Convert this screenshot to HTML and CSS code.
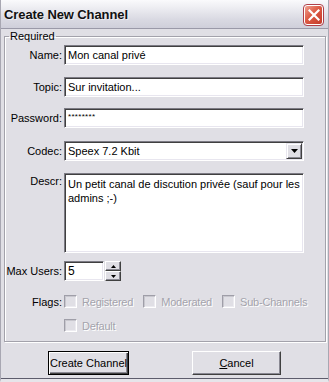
FILE: index.html
```html
<!DOCTYPE html>
<html>
<head>
<meta charset="utf-8">
<link rel="stylesheet" href="styles.css">
</head>
<body>
<div class="window">
  <div class="titlebar">
    <span class="title">Create New Channel</span>
    <span class="close"><svg width="12" height="12" viewBox="0 0 12 12"><path d="M1.5 1.5 L10.5 10.5 M10.5 1.5 L1.5 10.5" stroke="#fff" stroke-width="2.2" stroke-linecap="square"/></svg></span>
  </div>
  <div class="body">
    <fieldset class="group">
      <legend>Required</legend>
      <div class="row r-name">
        <label class="lbl">Name:</label>
        <div class="field">Mon canal privé</div>
      </div>
      <div class="row r-topic">
        <label class="lbl">Topic:</label>
        <div class="field">Sur invitation...</div>
      </div>
      <div class="row r-pass">
        <label class="lbl">Password:</label>
        <div class="field pass">********</div>
      </div>
      <div class="row r-codec">
        <label class="lbl">Codec:</label>
        <div class="field combo"><span class="combo-text">Speex 7.2 Kbit</span><span class="combo-btn"><svg width="7" height="4" viewBox="0 0 7 4"><path d="M0 0 H7 L3.5 4 Z" fill="#000"/></svg></span></div>
      </div>
      <div class="row r-descr">
        <label class="lbl top">Descr:</label>
        <div class="field area">Un petit canal de discution privée (sauf pour les admins ;-)</div>
      </div>
      <div class="row r-max">
        <label class="lbl">Max Users:</label>
        <div class="field num">5</div>
        <div class="spin">
          <span class="spin-btn"><svg width="5" height="3" viewBox="0 0 5 3"><path d="M2.5 0 L5 3 H0 Z" fill="#000"/></svg></span>
          <span class="spin-btn"><svg width="5" height="3" viewBox="0 0 5 3"><path d="M0 0 H5 L2.5 3 Z" fill="#000"/></svg></span>
        </div>
      </div>
      <div class="row r-flags">
        <label class="lbl">Flags:</label>
        <div class="checks">
          <span class="check"><span class="box"></span><span class="ctext">Registered</span></span>
          <span class="check"><span class="box"></span><span class="ctext">Moderated</span></span>
          <span class="check"><span class="box"></span><span class="ctext">Sub-Channels</span></span>
        </div>
      </div>
      <div class="row r-default">
        <span class="lbl"></span>
        <div class="checks">
          <span class="check"><span class="box"></span><span class="ctext">Default</span></span>
        </div>
      </div>
    </fieldset>
    <div class="buttons">
      <button class="btn default">Create Channel</button>
      <button class="btn cancel"><u>C</u>ancel</button>
    </div>
  </div>
</div>
</body>
</html>
```

FILE: styles.css
```css
html, body {
  margin: 0;
  padding: 0;
  background: #e0dfe5;
}
body {
  font-family: "Liberation Sans", Arial, sans-serif;
  font-size: 11px;
  color: #000;
}
.window {
  width: 329px;
  height: 382px;
  box-sizing: border-box;
  background: #e0dfe5;
  border-left: 1px solid #a8a7b2;
  border-right: 1px solid #a8a7b2;
  border-bottom: 3px solid #e6e5ea;
  box-shadow: inset 0 -1px 0 #5d5c6c;
  display: flex;
  flex-direction: column;
}
.titlebar {
  height: 29px;
  box-sizing: border-box;
  display: flex;
  align-items: center;
  justify-content: space-between;
  padding: 0 3px 0 3px;
  background: linear-gradient(#fafafc 0%, #ececf1 30%, #d9d9e2 70%, #cfcfda 100%);
  border-bottom: 1px solid #9a99a8;
}
.title {
  font-weight: bold;
  font-size: 13px;
  letter-spacing: -0.1px;
  color: #111;
  text-shadow: 1px 1px 0 rgba(255,255,255,0.6);
  margin-top: 1px;
}
.close {
  width: 19px;
  height: 20px;
  box-sizing: border-box;
  border: 1px solid #fff;
  outline: 1px solid #b0404a;
  border-radius: 3px;
  background: linear-gradient(135deg, #f0a090 0%, #dc5a44 45%, #c43a2a 100%);
  display: flex;
  align-items: center;
  justify-content: center;
  margin-right: 2px;
  margin-top: 1px;
}
.body {
  flex: 1;
  display: flex;
  flex-direction: column;
  padding: 0 2px 0 2px;
}
.group {
  margin: 1px 0 0 1px;
  padding: 2px 21px 0 0;
  height: 312px;
  box-sizing: border-box;
  border: 1px solid #a3a2ab;
  box-shadow: inset 1px 1px 0 #fff, 1px 1px 0 #fff;
  min-width: 0;
}
.group legend {
  padding: 0 1px;
  margin-left: 4px;
  line-height: 13px;
}
.row {
  display: flex;
  align-items: center;
  margin-bottom: 12px;
}
.lbl {
  width: 59px;
  flex: none;
  text-align: right;
  padding-right: 2px;
  box-sizing: border-box;
  white-space: nowrap;
}
.lbl.top {
  align-self: flex-start;
  padding-top: 2px;
}
.field {
  flex: 1;
  height: 20px;
  box-sizing: border-box;
  background: #fff;
  border-top: 1px solid #7c7b84;
  border-left: 1px solid #7c7b84;
  border-right: 1px solid #fff;
  border-bottom: 1px solid #fff;
  box-shadow: inset 1px 1px 0 #404040, inset -1px -1px 0 #e8e6ef;
  padding: 2px 3px 0 3px;
  line-height: 14px;
  white-space: nowrap;
  overflow: hidden;
}
.field.pass {
  font-size: 8px;
  letter-spacing: 0.3px;
  line-height: 12px;
}
.r-topic { margin-bottom: 11px; }
.r-pass { margin-bottom: 13px; }
.field.combo {
  display: flex;
  align-items: center;
  padding: 0 2px 0 3px;
}
.combo-text {
  flex: 1;
}
.combo-btn {
  width: 16px;
  height: 16px;
  box-sizing: border-box;
  background: #e0dfe5;
  border-top: 1px solid #e8e6ef;
  border-left: 1px solid #e8e6ef;
  border-right: 1px solid #404040;
  border-bottom: 1px solid #404040;
  box-shadow: inset 1px 1px 0 #fff, inset -1px -1px 0 #8a8993;
  display: flex;
  align-items: center;
  justify-content: center;
  margin-right: -1px;
}
.field.area {
  height: 80px;
  white-space: normal;
  line-height: 14px;
  padding: 3px 3px;
}
.r-descr { margin-bottom: 8px; }
.field.num {
  flex: none;
  width: 40px;
  padding-left: 3px;
  font-size: 12px;
}
.spin {
  display: flex;
  flex-direction: column;
  margin-left: 1px;
  height: 20px;
}
.spin-btn {
  width: 16px;
  height: 10px;
  box-sizing: border-box;
  background: #e0dfe5;
  border-top: 1px solid #fff;
  border-left: 1px solid #fff;
  border-right: 1px solid #404040;
  border-bottom: 1px solid #404040;
  box-shadow: inset -1px -1px 0 #8a8993;
  display: flex;
  align-items: center;
  justify-content: center;
}
.r-max { margin-bottom: 14px; }
.r-flags { margin-bottom: 11px; height: 13px; }
.r-default { height: 13px; margin-bottom: 0; }
.checks {
  display: flex;
  align-items: center;
  gap: 10px;
  flex: none;
  white-space: nowrap;
}
.check {
  display: flex;
  align-items: center;
  gap: 5px;
  flex: none;
}
.box {
  width: 13px;
  height: 13px;
  box-sizing: border-box;
  border-top: 1px solid #9f9ea8;
  border-left: 1px solid #9f9ea8;
  border-right: 1px solid #fff;
  border-bottom: 1px solid #fff;
  box-shadow: inset 1px 1px 0 #c8c7ce, inset -1px -1px 0 #ecebf0;
  background: #e0dfe5;
}
.ctext {
  color: #a4a3ac;
  text-shadow: 1px 1px 0 #fff;
  letter-spacing: -0.2px;
}
.buttons {
  display: flex;
  padding: 9px 0 0 45px;
  gap: 63px;
}
.btn {
  font-family: "Liberation Sans", Arial, sans-serif;
  font-size: 11px;
  color: #000;
  height: 24px;
  box-sizing: border-box;
  background: #e0dfe5;
  padding: 0;
  margin: 0;
  cursor: default;
}
.btn.default {
  width: 81px;
  border: 1px solid #000;
  box-shadow: inset 1px 1px 0 #fff, inset -1px -1px 0 #404040, inset -2px -2px 0 #8a8993;
}
.btn.cancel {
  width: 89px;
  border-top: 1px solid #fff;
  border-left: 1px solid #fff;
  border-right: 1px solid #404040;
  border-bottom: 1px solid #404040;
  box-shadow: inset -1px -1px 0 #8a8993;
}
```
